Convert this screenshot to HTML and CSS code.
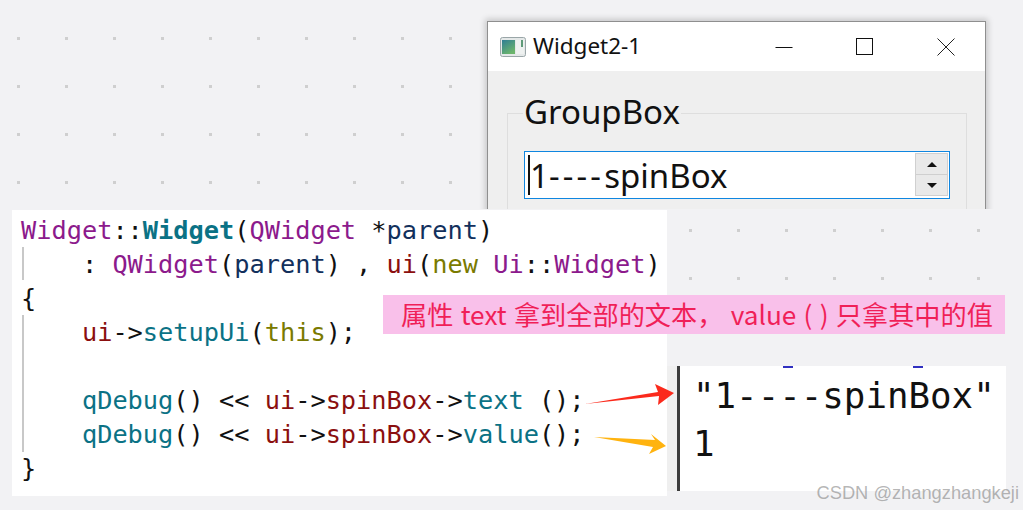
FILE: index.html
```html
<!DOCTYPE html>
<html lang="zh">
<head>
<meta charset="utf-8">
<title>Widget2-1</title>
<link rel="stylesheet" href="styles.css">
</head>
<body>
<div class="canvas">
  <div class="window-clip">
    <div class="window">
      <div class="titlebar">
        <svg class="app-icon" width="26" height="22" viewBox="0 0 26 22">
          <defs><linearGradient id="g" x1="0" y1="0" x2="0.6" y2="1"><stop offset="0" stop-color="#2f7d94"/><stop offset="1" stop-color="#6cb56c"/></linearGradient></defs>
          <rect x="0.5" y="1.5" width="25" height="19" rx="2" fill="#e4e8e8" stroke="#9aa6a8"/>
          <rect x="2" y="4" width="13" height="14" fill="url(#g)"/>
          <rect x="16" y="4" width="8" height="14" fill="#eef1f0"/>
          <rect x="21" y="4" width="2" height="7" fill="#5e9a78"/>
        </svg>
        <span class="title">Widget2-1</span>
        <div class="controls">
          <svg class="ctl" width="18" height="18" viewBox="0 0 18 18"><path d="M0.5 9.5H17.5" stroke="#111" fill="none"/></svg>
          <svg class="ctl" width="18" height="18" viewBox="0 0 18 18"><rect x="0.5" y="0.5" width="16" height="16" stroke="#111" fill="none"/></svg>
          <svg class="ctl" width="18" height="18" viewBox="0 0 18 18"><path d="M0.5 0.5L17.5 17.5M17.5 0.5L0.5 17.5" stroke="#222" fill="none"/></svg>
        </div>
      </div>
      <div class="client">
        <fieldset class="group">
          <legend class="legend">GroupBox</legend>
          <div class="spin">
            <span class="caret"></span><span class="spin-text">1<span class="dashes">----</span>spinBox</span>
            <div class="spin-btns">
              <div class="spin-btn"><span class="tri-up"></span></div>
              <div class="spin-btn"><span class="tri-down"></span></div>
            </div>
          </div>
        </fieldset>
      </div>
    </div>
  </div>

  <pre class="code"><span class="guide g1"></span><span class="guide g2"></span><span class="p">Widget</span><span class="d">::</span><b class="t">Widget</b><span class="d">(</span><span class="p">QWidget</span> <span class="d">*</span><span class="n">parent</span><span class="d">)</span>
    <span class="d">:</span> <span class="p">QWidget</span><span class="d">(</span><span class="n">parent</span><span class="d">) ,</span> <span class="r">ui</span><span class="d">(</span><span class="o">new</span> <span class="p">Ui</span><span class="d">::</span><span class="p">Widget</span><span class="d">)</span>
<span class="d">{</span>
    <span class="r">ui</span><span class="d">-&gt;</span><span class="t">setupUi</span><span class="d">(</span><span class="o">this</span><span class="d">);</span>

    <span class="t">qDebug</span><span class="d">() &lt;&lt;</span> <span class="r">ui</span><span class="d">-&gt;</span><span class="r">spinBox</span><span class="d">-&gt;</span><span class="t">text</span> <span class="d">();</span>
    <span class="t">qDebug</span><span class="d">() &lt;&lt;</span> <span class="r">ui</span><span class="d">-&gt;</span><span class="r">spinBox</span><span class="d">-&gt;</span><span class="t">value</span><span class="d">();</span>
<span class="d">}</span></pre>

  <div class="note">属性 text 拿到全部的文本， value ( ) 只拿其中的值</div>

  <div class="output">
    <span class="speck s1"></span><span class="speck s2"></span>
    <div class="out-line">"1----spinBox"</div>
    <div class="out-line">1</div>
  </div>

  <svg class="arrows" width="1023" height="510" viewBox="0 0 1023 510">
    <polygon fill="#fb2a1c" points="585,404 658,392 655,384 674,393 658,405 659,396"/>
    <polygon fill="#ffb30f" points="594,437 655,440 651,434 666,446 649,454 653,447"/>
  </svg>

  <div class="mark">CSDN @zhangzhangkeji</div>
</div>
</body>
</html>
```
FILE: styles.css
```css
* { box-sizing: border-box; }
html, body { margin: 0; padding: 0; }
body { width: 1023px; height: 510px; overflow: hidden; background: #f2f2f4; }

.canvas {
  position: relative;
  width: 1023px;
  height: 510px;
  overflow: hidden;
  background-color: #f2f2f4;
  background-image: conic-gradient(from 270deg at 3px 3px, #cfcfcf 0 25%, transparent 0);
  background-size: 48px 48px;
  background-position: 17px 37px;
}

.window-clip {
  position: absolute;
  left: 470px;
  top: 0;
  width: 553px;
  height: 209px;
  overflow: hidden;
}
.window {
  margin: 21px 0 0 17px;
  width: 499px;
  height: 260px;
  background: #efefef;
  border: 1px solid #8f8f8f;
  box-shadow: 0 0 6px 2px rgba(0, 0, 0, .18);
}
.titlebar {
  display: flex;
  align-items: center;
  height: 49px;
  padding-left: 12px;
  background: #fff;
}
.app-icon { flex: none; }
.title {
  margin-left: 7px;
  font: 22.5px/1 "Noto Sans", "Open Sans", sans-serif;
  color: #111;
}
.controls {
  display: flex;
  gap: 63px;
  margin-left: auto;
  margin-right: 30px;
}
.client { padding: 21px 18px 0 19px; }
.group {
  margin: 0;
  padding: 15px 16px 0 16px;
  height: 140px;
  border: 1px solid #dedede;
  min-width: 0;
}
.legend {
  margin-left: -1px;
  padding: 0 1px 4px;
  font: 33px/1.2 "Noto Sans", "Open Sans", sans-serif;
  color: #111;
}
.spin {
  position: relative;
  display: flex;
  align-items: center;
  height: 48px;
  background: #fff;
  border: 1px solid #0f86e0;
  padding-left: 3px;
}
.caret { flex: none; width: 2px; height: 40px; background: #111; }
.spin-text {
  padding-top: 2px;
  font: 33px/1 "Noto Sans", "Open Sans", sans-serif;
  color: #111;
}
.dashes { letter-spacing: 3.2px; }
.spin-btns {
  display: flex;
  flex-direction: column;
  margin-left: auto;
  margin-right: 1px;
  width: 33px;
  height: 43px;
  border: 1px solid #d0d0d0;
  background: #e9e9e9;
}
.spin-btn {
  flex: 1;
  display: flex;
  align-items: center;
  justify-content: center;
}
.spin-btn + .spin-btn { border-top: 1px solid #cfcfcf; }
.tri-up { width: 0; height: 0; border: 5px solid transparent; border-top: 0; border-bottom: 5px solid #111; }
.tri-down { width: 0; height: 0; border: 5px solid transparent; border-bottom: 0; border-top: 5px solid #111; }

.code {
  position: absolute;
  left: 12px;
  top: 210px;
  width: 655px;
  height: 286px;
  margin: 0;
  padding: 4px 0 0 9px;
  background: #fff;
  font: 25.3px/34px "DejaVu Sans Mono", "Liberation Mono", monospace;
  color: #111;
}
.code b { font-weight: 700; }
.p { color: #8c1a8c; }
.t { color: #0b7285; }
.n { color: #12305c; }
.r { color: #8b0f0f; }
.o { color: #7a7a00; }
.d { color: #111; }
.guide { position: absolute; left: 10px; width: 2px; background: #c8c8c8; }
.g1 { top: 37px; height: 33px; }
.g2 { top: 105px; height: 137px; }

.note {
  position: absolute;
  left: 383px;
  top: 295px;
  width: 622px;
  height: 39px;
  padding-left: 18px;
  background: #f9c0ea;
  color: #f01f58;
  font: 26.2px/39px "Noto Sans CJK SC", "Noto Sans", sans-serif;
  word-spacing: 1.4px;
  white-space: nowrap;
}

.output {
  position: absolute;
  left: 667px;
  top: 366px;
  width: 339px;
  height: 125px;
  padding: 6px 0 0 26px;
  background: linear-gradient(to right, #efefef 0 10px, #3c3c3c 10px 13px, #fff 13px);
  font: 35.8px/48px "DejaVu Sans Mono", monospace;
  color: #111;
}
.out-line { white-space: pre; }
.speck { position: absolute; top: 0; width: 10px; height: 2px; background: #3030c0; }
.s1 { left: 116px; }
.s2 { left: 246px; }

.arrows { position: absolute; left: 0; top: 0; }

.mark {
  position: absolute;
  right: 4px;
  top: 482px;
  font: 18.3px/1.2 "Liberation Sans", sans-serif;
  color: rgba(120, 120, 120, .55);
  white-space: nowrap;
}
```
